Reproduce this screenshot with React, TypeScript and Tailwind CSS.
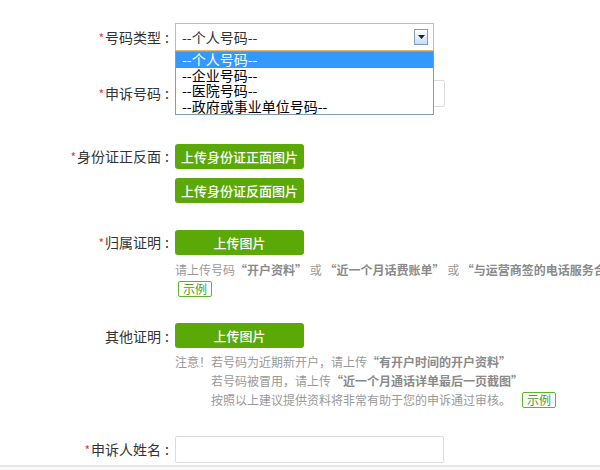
import React from 'react';

const font = { fontFamily: '"Noto Sans CJK SC", "Noto Sans", sans-serif' };

const Label: React.FC<{ text: string; required?: boolean }> = ({ text, required }) => (
  <div className="w-[175px] shrink-0 text-right text-[14px] leading-[20px] text-[#333] pr-[6px] whitespace-nowrap">
    {required && <span className="text-[#e4393c] text-[12px] mr-[1px]">*</span>}
    {text}
    <span className="ml-[4px]">:</span>
  </div>
);

const GreenButton: React.FC<{ children: React.ReactNode }> = ({ children }) => (
  <div className="w-[129px] h-[25px] rounded-[3px] bg-[#5aa907] text-white text-[13px] font-medium flex items-center justify-center">
    {children}
  </div>
);

const Example: React.FC = () => (
  <span className="inline-flex items-center h-[16px] px-[4px] border border-[#5cb531] rounded-[2px] text-[#4a9e1e] text-[12px] leading-none bg-white">
    示例
  </span>
);

export default function App() {
  const options = ['--个人号码--', '--企业号码--', '--医院号码--', '--政府或事业单位号码--'];

  return (
    <div className="w-[600px] h-[470px] bg-white overflow-hidden relative" style={font}>
      <div className="pt-[23px]">
        {/* 号码类型 */}
        <div className="flex items-center h-[28px] relative z-10">
          <Label text="号码类型" required />
          <div className="relative w-[259px] h-[28px] border border-[#e9b865] bg-white flex items-center pl-[6px] text-[14px] text-[#333]">
            --个人号码--
            <div className="absolute right-[5px] top-[5px] w-[14px] h-[16px] border border-[#7f9db9] bg-gradient-to-b from-white to-[#c6ddf7] flex items-center justify-center">
              <svg width="7" height="4" viewBox="0 0 7 4"><path d="M0 0h7L3.5 4z" fill="#222" /></svg>
            </div>
            <div className="absolute left-[-1px] top-[27px] w-[259px] border border-[#7f9db9] bg-white text-[14px] leading-[15.5px] text-black">
              {options.map((o, i) => (
                <div
                  key={o}
                  className={
                    i === 0
                      ? 'h-[15.5px] pl-[6px] bg-[#3399ff] text-white'
                      : 'h-[15.5px] pl-[6px]'
                  }
                >
                  {o}
                </div>
              ))}
            </div>
          </div>
        </div>

        {/* 申诉号码 */}
        <div className="flex items-center h-[27px] mt-[29px]">
          <Label text="申诉号码" required />
          <div className="w-[270px] h-[27px] border border-[#dcdcdc] rounded-[2px]" />
        </div>

        {/* 身份证正反面 */}
        <div className="flex mt-[37px]">
          <div className="h-[25px] flex items-center">
            <Label text="身份证正反面" required />
          </div>
          <div className="flex flex-col gap-[9px]">
            <GreenButton>上传身份证正面图片</GreenButton>
            <GreenButton>上传身份证反面图片</GreenButton>
          </div>
        </div>

        {/* 归属证明 */}
        <div className="flex mt-[27px]">
          <div className="h-[25px] flex items-center">
            <Label text="归属证明" required />
          </div>
          <div className="flex flex-col">
            <GreenButton>上传图片</GreenButton>
            <div className="mt-[6px] h-[18px] text-[12px] leading-[18px] text-[#999] whitespace-nowrap">
              请上传号码<b className="text-[#8a8a8a]">“开户资料”</b> 或 <b className="text-[#8a8a8a]">“近一个月话费账单”</b> 或 <b className="text-[#8a8a8a]">“与运营商签的电话服务合同”</b>
            </div>
            <div className="mt-[1px] h-[17px] pl-[3px] flex items-center">
              <Example />
            </div>
          </div>
        </div>

        {/* 其他证明 */}
        <div className="flex mt-[26px]">
          <div className="h-[25px] flex items-center">
            <Label text="其他证明" />
          </div>
          <div className="flex flex-col">
            <GreenButton>上传图片</GreenButton>
            <div className="mt-[4px] text-[12px] leading-[19px] text-[#999] whitespace-nowrap">
              <div className="h-[19px]">
                注意！若号码为近期新开户，请上传<b className="text-[#8a8a8a]">“有开户时间的开户资料”</b>
              </div>
              <div className="h-[19px] pl-[36px]">
                若号码被冒用，请上传<b className="text-[#8a8a8a]">“近一个月通话详单最后一页截图”</b>
              </div>
              <div className="h-[19px] pl-[36px] flex items-center">
                按照以上建议提供资料将非常有助于您的申诉通过审核。
                <span className="ml-[11px] flex items-center">
                  <Example />
                </span>
              </div>
            </div>
          </div>
        </div>

        {/* 申诉人姓名 */}
        <div className="flex items-center h-[27px] mt-[27px]">
          <Label text="申诉人姓名" required />
          <div className="w-[269px] h-[27px] border border-[#dcdcdc] rounded-[2px]" />
        </div>

        <div className="mt-[2px] border-t-2 border-[#e6e6e6] h-[10px] bg-[#fafafa]" />
      </div>
    </div>
  );
}
